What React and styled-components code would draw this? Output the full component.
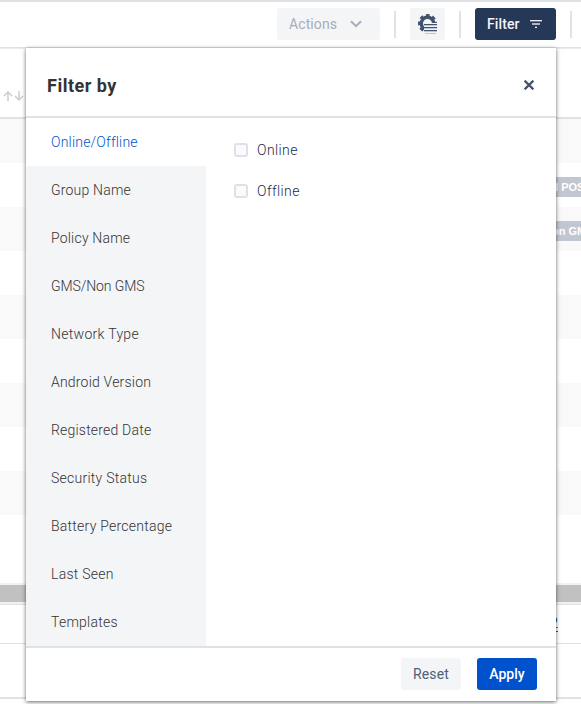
import React, { useState } from "react";
import styled, { createGlobalStyle } from "styled-components";

const GlobalStyle = createGlobalStyle`
  * { box-sizing: border-box; }
  body {
    margin: 0;
    overflow: hidden;
    background: #fff;
    font-family: Roboto, "Liberation Sans", sans-serif;
    font-size: 14px;
  }
  button { font: inherit; border: 0; padding: 0; }
`;

const Page = styled.div`
  position: relative;
  width: 581px;
  height: 704px;
  overflow: hidden;
  background: #fff;
`;

const Toolbar = styled.div`
  display: flex;
  align-items: center;
  justify-content: flex-end;
  gap: 14px;
  height: 48px;
  padding: 0 9px 1px 0;
  border-top: 2px solid #dfe3e8;
  border-bottom: 1px solid #dfe1e5;
`;

const Divider = styled.span`
  width: 2px;
  height: 27px;
  background: #dfe3e8;
`;

const ToolButton = styled.button`
  display: flex;
  align-items: center;
  justify-content: ${(p) => (p.$center ? "center" : "space-between")};
  width: ${(p) => p.$width}px;
  height: 32px;
  padding: ${(p) => (p.$center ? "0" : p.$pad)};
  border-radius: 3px;
  background: ${(p) => (p.$dark ? "#253858" : "#f4f5f7")};
  color: ${(p) => (p.$dark ? "#f4f5f7" : "#a5adba")};
  font-weight: ${(p) => (p.$dark ? 500 : 400)};
  letter-spacing: ${(p) => p.$track || 0}px;
`;

const TableHead = styled.div`
  display: flex;
  align-items: center;
  height: 71px;
  padding: 25px 0 0 3px;
  border-top: 1px solid #e8eaee;
  border-bottom: 2px solid #dfe1e6;
`;

const TableRow = styled.div`
  display: flex;
  align-items: center;
  height: 44px;
  padding-top: 4px;
  background: ${(p) => (p.$striped ? "#f9f9f9" : "#fff")};
`;

const Badge = styled.span`
  flex: none;
  height: 20px;
  padding: 0 6px;
  margin-left: ${(p) => p.$start}px;
  background: #c1c7d0;
  color: #fff;
  font: bold 11px/20px "Liberation Sans", sans-serif;
  white-space: nowrap;
`;

const TableTail = styled.div`
  height: 68px;
`;

const ScrollTrack = styled.div`
  height: 22px;
  padding: 2px 0;
  background: #f1f1f1;
  border-bottom: 1px solid #dfe1e6;
`;

const ScrollThumb = styled.div`
  height: 17px;
  background: #c1c1c1;
`;

const Pager = styled.div`
  display: flex;
  align-items: center;
  justify-content: flex-end;
  height: 39px;
  padding: 0 23px 3px 0;
  border-bottom: 1px solid #dfe1e6;
  color: #42526e;
  text-decoration: underline;
  text-underline-offset: 3px;
`;

const PageFoot = styled.div`
  height: 55px;
  border-bottom: 2px solid #dfe3e8;
`;

const Panel = styled.section`
  position: absolute;
  top: 48px;
  left: 26px;
  width: 530px;
  height: 653px;
  display: flex;
  flex-direction: column;
  background: #fff;
  box-shadow: 0 1px 4px rgba(0, 0, 0, 0.6);
`;

const PanelHeader = styled.header`
  display: flex;
  align-items: center;
  justify-content: space-between;
  height: 70px;
  padding: 6px 21px 0 21px;
  border-bottom: 2px solid #dfe3e8;
`;

const Title = styled.h2`
  margin: 0;
  color: #333;
  font-size: 18px;
  font-weight: 700;
  letter-spacing: 0.5px;
`;

const CloseButton = styled.button`
  display: flex;
  background: none;
`;

const PanelBody = styled.div`
  display: flex;
  height: 528px;
`;

const Categories = styled.nav`
  width: 180px;
`;

const Category = styled.button`
  display: block;
  width: 100%;
  height: 48px;
  padding-left: 25px;
  background: ${(p) => (p.$active ? "#fff" : "#f4f5f7")};
  color: ${(p) => (p.$active ? "#0052cc" : "#333")};
  font-weight: 300;
  letter-spacing: ${(p) => p.$track}px;
  text-align: left;
`;

const Options = styled.div`
  display: flex;
  flex-direction: column;
  gap: 21px;
  padding: 22px 28px;
`;

const Option = styled.label`
  display: flex;
  align-items: center;
  gap: 9px;
  height: 20px;
  color: #172b4d;
  font-weight: 300;
  letter-spacing: 0.4px;
`;

const Checkbox = styled.input`
  appearance: none;
  width: 14px;
  height: 14px;
  margin: 0;
  border: 2px solid #dfe1e6;
  border-radius: 3px;
  background: #fafbfc;
`;

const PanelFooter = styled.footer`
  display: flex;
  align-items: center;
  justify-content: flex-end;
  gap: 16px;
  height: 55px;
  padding: 0 19px 1px 0;
  border-top: 2px solid #dfe3e8;
`;

const ActionButton = styled.button`
  width: 60px;
  height: 32px;
  border-radius: 3px;
  background: ${(p) => (p.$primary ? "#0052cc" : "#f4f5f7")};
  color: ${(p) => (p.$primary ? "#fff" : "#505f79")};
  font-weight: ${(p) => (p.$primary ? 500 : 400)};
  letter-spacing: ${(p) => p.$track}px;
`;

const ChevronIcon = () => (
  <svg width="12" height="8" viewBox="0 0 12 8" fill="none" stroke="#a5adba" strokeWidth="2">
    <path d="M1 1.2 6 6.2 11 1.2" />
  </svg>
);

const GearListIcon = () => (
  <svg width="20" height="20" viewBox="0 0 20 20">
    <circle cx="9.5" cy="9.5" r="6.2" fill="none" stroke="#42526e" strokeWidth="3.4" />
    <circle cx="9.5" cy="9.5" r="8.4" fill="none" stroke="#42526e" strokeWidth="2.2" strokeDasharray="3.8 2.797" strokeDashoffset="1.9" />
    <path d="M6 9h14v11H6z" fill="#f4f5f7" />
    <path d="M6 10.5h13M6 13.5h13M6 16.5h13" stroke="#42526e" strokeWidth="1" />
    <path d="M6 11.5h13M6 14.5h13M6 17.5h13M7 19.5h11" stroke="#c1c7d0" strokeWidth="1" />
  </svg>
);

const FilterIcon = () => (
  <svg width="12" height="8" viewBox="0 0 12 8" stroke="#f4f5f7" strokeWidth="1.3">
    <path d="M0 .7h12" />
    <path d="M2 4h8" strokeWidth="1.8" stroke="#c1c7d0" />
    <path d="M5 7.4h2" />
  </svg>
);

const SortIcon = () => (
  <svg width="21" height="10" viewBox="0 0 21 10" fill="none" stroke="#c9ced6" strokeWidth="1.5">
    <path d="M5 10V1M1 5l4-4 4 4M16 0v9M12 5l4 4 4-4" />
  </svg>
);

const CloseIcon = () => (
  <svg width="12" height="10" viewBox="0 0 12 10" stroke="#42526e" strokeWidth="2.2">
    <path d="M1.6.6l8.8 8.8M10.4.6L1.6 9.4" />
  </svg>
);

const categories = [
  ["Online/Offline", 0.2],
  ["Group Name", 0.2],
  ["Policy Name", 0.2],
  ["GMS/Non GMS", -0.1],
  ["Network Type", 0.3],
  ["Android Version", 0.2],
  ["Registered Date", 0.2],
  ["Security Status", 0.25],
  ["Battery Percentage", 0.25],
  ["Last Seen", 0.25],
  ["Templates", 0.25],
];

const rows = [null, ["Android POS", 510], ["Non GMS", 538], null, null, null, null, null, null];

export default function App() {
  const [active, setActive] = useState("Online/Offline");
  return (
    <Page>
      <GlobalStyle />
      <Toolbar>
        <ToolButton $width={103} $pad="0 18px 0 12px" $track={0.1}>Actions<ChevronIcon /></ToolButton>
        <Divider />
        <ToolButton $width={35} $center><GearListIcon /></ToolButton>
        <Divider />
        <ToolButton $width={81} $pad="0 14px 0 12px" $track={0.1} $dark>Filter<FilterIcon /></ToolButton>
        <Divider />
      </Toolbar>
      <TableHead><SortIcon /></TableHead>
      {rows.map((badge, i) => (
        <TableRow key={i} $striped={i % 2 === 0}>
          {badge && <Badge $start={badge[1]}>{badge[0]}</Badge>}
        </TableRow>
      ))}
      <TableTail />
      <ScrollTrack><ScrollThumb /></ScrollTrack>
      <Pager>2</Pager>
      <PageFoot />
      <Panel>
        <PanelHeader>
          <Title>Filter by</Title>
          <CloseButton aria-label="Close"><CloseIcon /></CloseButton>
        </PanelHeader>
        <PanelBody>
          <Categories>
            {categories.map(([name, track]) => (
              <Category key={name} $active={name === active} $track={track} onClick={() => setActive(name)}>
                {name}
              </Category>
            ))}
          </Categories>
          <Options>
            <Option><Checkbox type="checkbox" />Online</Option>
            <Option><Checkbox type="checkbox" />Offline</Option>
          </Options>
        </PanelBody>
        <PanelFooter>
          <ActionButton $track={0.15}>Reset</ActionButton>
          <ActionButton $primary $track={0}>Apply</ActionButton>
        </PanelFooter>
      </Panel>
    </Page>
  );
}
